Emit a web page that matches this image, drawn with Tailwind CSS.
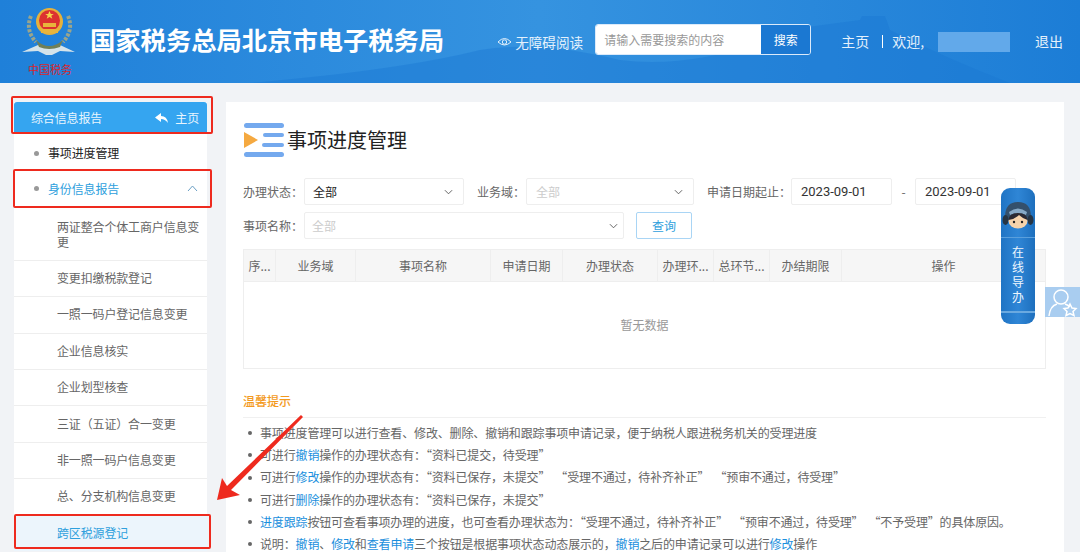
<!DOCTYPE html>
<html lang="zh-CN">
<head>
    <meta charset="UTF-8">
    <title>事项进度管理</title>
    <script src="https://cdn.jsdelivr.net/npm/@tailwindcss/browser@4"></script>
</head>
<body class="relative w-[1080px] h-[552px] overflow-hidden bg-[#f1f3f6] font-['Noto_Sans_CJK_SC','Noto_Sans',sans-serif] text-[12px] text-[#666]">
    <!-- Header -->
    <header class="relative h-[83px] flex items-center pb-[4px] overflow-hidden bg-gradient-to-r from-[#1f80d9] via-[#3593e0] to-[#1c7dd6] text-white">
        <svg class="absolute left-0 top-0" width="1080" height="83" viewBox="0 0 1080 83">
            <path d="M250 83 Q400 70 480 50 Q540 40 620 60 Q700 70 800 28 L860 20 L862 16 L885 16 L890 30 Q950 60 1010 83 Z" fill="#1b78d2" opacity=".45"/>
        </svg>
        <svg class="relative ml-[20px] shrink-0 self-start mt-[2px]" width="56" height="78" viewBox="0 0 56 78">
            <!-- wreath -->
            <path d="M11 14 Q5 28 16 40" fill="none" stroke="#9aa58c" stroke-width="4" stroke-dasharray="3 1.500"/>
            <path d="M48 14 Q54 28 43 40" fill="none" stroke="#9aa58c" stroke-width="4" stroke-dasharray="3 1.500"/>
            <!-- wings -->
            <path d="M2 50 L18 43 L29 46 L40 43 L55 50 L40 49 L32 53 L26 53 L18 49 Z" fill="#d5e3ea"/>
            <path d="M16 38 Q29 50 43 38 L40 45 Q29 49 19 45 Z" fill="#6f7f58"/>
            <!-- badge -->
            <circle cx="29.500" cy="19.500" r="13.500" fill="#e6b13b"/>
            <circle cx="29.500" cy="18.500" r="10.500" fill="#dc3130"/>
            <path d="M21 27 h17 v4 h-17 Z M23 21 h13 v4 h-13 Z" fill="#e8b53c"/>
            <path d="M29.500 9 l1.300 3 h3 l-2.500 1.800 1 3 -2.800-1.800 -2.800 1.800 1-3 -2.500-1.800 h3 Z" fill="#f4d24a"/>
            <text x="8" y="72" font-size="11" fill="#d8262c" font-family="Noto Sans CJK SC">中国税务</text>
        </svg>
        <h1 class="relative ml-[14px] text-[25.300px] font-bold leading-none whitespace-nowrap">国家税务总局北京市电子税务局</h1>
        <div class="relative ml-[53px] mt-[5px] flex items-center gap-[3px] text-[13.600px] text-[#e4f1fc]">
            <svg width="15" height="12" viewBox="0 0 15 12" fill="none" stroke="currentColor" stroke-width="1"><path d="M1 6 Q7.500-1 14 6 Q7.500 12 1 6 Z"/><circle cx="7.500" cy="6" r="2.200"/></svg>
            <span>无障碍阅读</span>
        </div>
        <div class="relative ml-[12px] flex w-[216px] h-[31px] rounded-[3px] border border-[#dbeafa] overflow-hidden">
            <span class="w-[165px] bg-white pl-[8px] leading-[29px] text-[12px] text-[#999]">请输入需要搜索的内容</span>
            <span class="flex-1 bg-[#1b78d2] text-center leading-[29px] text-[12px]">搜索</span>
        </div>
        <div class="relative ml-[30px] mt-[4px] flex items-center text-[14px] text-[#e4f1fc]">
            <span>主页</span>
            <span class="ml-[13px] w-px h-[13px] bg-white"></span>
            <span class="ml-[9px]">欢迎,</span>
            <span class="ml-[14px] w-[72px] h-[20px] bg-[#62a9ea]"></span>
            <span class="ml-[25px]">退出</span>
        </div>
    </header>

    <div class="flex items-start pt-[19px]">
        <!-- Sidebar -->
        <aside class="ml-[14px] w-[193px] shrink-0 bg-white tracking-[-0.150px]">
            <div class="h-[32px] flex items-center justify-between pl-[17px] pr-[8px] bg-[#35a5f0] text-[#e8f5fe] rounded-t-[3px]">
                <span>综合信息报告</span>
                <span class="flex items-center gap-[7px]">
                    <svg width="13" height="10" viewBox="0 0 13 10" fill="#fff"><path d="M6 0 L0 4.500 L6 9 V6 Q10 6 13 10 Q12 3 6 3 Z"/></svg>
                    主页
                </span>
            </div>
            <div class="h-[36px] flex items-center pt-[2px] pl-[20px] text-[#222]">
                <span class="w-[5px] h-[5px] rounded-full bg-[#999] mr-[9px]"></span>事项进度管理
            </div>
            <div class="h-[37px] flex items-center pl-[20px] pr-[9px] text-[#2ea0dd]">
                <span class="w-[5px] h-[5px] rounded-full bg-[#999] mr-[9px]"></span>身份信息报告
                <svg class="ml-auto" width="11" height="7" viewBox="0 0 11 7" fill="none" stroke="#6a9fc4"><path d="M1 6 L5.500 1 L10 6"/></svg>
            </div>
            <div class="border-t border-[#eee] pl-[43px] pr-[6px] pt-[11px] leading-[15px] h-[53px]">两证整合个体工商户信息变更</div>
            <div class="border-t border-[#eee] pl-[43px] h-[36px] leading-[33px]">变更扣缴税款登记</div>
            <div class="border-t border-[#eee] pl-[43px] h-[37px] leading-[34px]">一照一码户登记信息变更</div>
            <div class="border-t border-[#eee] pl-[43px] h-[36px] leading-[33px]">企业信息核实</div>
            <div class="border-t border-[#eee] pl-[43px] h-[36px] leading-[33px]">企业划型核查</div>
            <div class="border-t border-[#eee] pl-[43px] h-[37px] leading-[35px]">三证&#65288;五证&#65289;合一变更</div>
            <div class="border-t border-[#eee] pl-[43px] h-[36px] leading-[33px]">非一照一码户信息变更</div>
            <div class="border-t border-[#eee] pl-[43px] h-[37px] leading-[34px]">总、分支机构信息变更</div>
            <div class="pl-[43px] h-[36px] leading-[36px] bg-[#ecf5fc] text-[#2ea0dd]">跨区税源登记</div>
        </aside>

        <!-- Main card -->
        <main class="ml-[19px] w-[838px] h-[460px] bg-white pl-[17px] pr-[18px]">
            <div class="flex items-center h-[38px] mt-[19px]">
                <svg width="44" height="34" viewBox="0 0 44 34">
                    <rect x="1" y="0" width="40" height="5" rx="2.500" fill="#74a9ee"/>
                    <rect x="1" y="29" width="40" height="5" rx="2.500" fill="#74a9ee"/>
                    <rect x="20" y="10" width="21" height="4" rx="2" fill="#74a9ee"/>
                    <rect x="19" y="20" width="22" height="4" rx="2" fill="#74a9ee"/>
                    <path d="M1 9 L15 17 L1 25 Z" fill="#f5a940"/>
                </svg>
                <h2 class="text-[20px] text-[#222] font-normal leading-none">事项进度管理</h2>
            </div>

            <!-- Filters -->
            <div class="mt-[19px] flex items-center h-[27px]">
                <span class="w-[61px] shrink-0 whitespace-nowrap">办理状态&#65306;</span>
                <div class="w-[160px] h-[27px] border border-[#eee] rounded-[2px] flex items-center justify-between pl-[8px] pr-[10px] text-[#222]">全部
                    <svg width="9" height="6" viewBox="0 0 10 6" fill="none" stroke="#555"><path d="M1 1 L5 5 L9 1"/></svg>
                </div>
                <span class="ml-[13px] w-[49px] shrink-0 whitespace-nowrap">业务域&#65306;</span>
                <div class="w-[168px] h-[27px] border border-[#eee] rounded-[2px] flex items-center justify-between pl-[9px] pr-[10px] text-[#ccc]">全部
                    <svg width="9" height="6" viewBox="0 0 10 6" fill="none" stroke="#555"><path d="M1 1 L5 5 L9 1"/></svg>
                </div>
                <span class="ml-[13px] w-[84px] shrink-0 whitespace-nowrap">申请日期起止&#65306;</span>
                <div class="w-[101px] h-[27px] border border-[#eee] rounded-[2px] pl-[9px] leading-[25px] text-[#333] font-['Roboto'] text-[13px]">2023-09-01</div>
                <span class="w-[23px] text-center">-</span>
                <div class="w-[101px] h-[27px] border border-[#eee] rounded-[2px] pl-[9px] leading-[25px] text-[#333] font-['Roboto'] text-[13px]">2023-09-01</div>
            </div>
            <div class="mt-[7px] flex items-center h-[27px]">
                <span class="w-[61px] shrink-0 whitespace-nowrap">事项名称&#65306;</span>
                <div class="w-[320px] h-[27px] border border-[#eee] rounded-[2px] flex items-center justify-between pl-[7px] pr-[5px] text-[#ccc]">全部
                    <svg width="9" height="6" viewBox="0 0 10 6" fill="none" stroke="#555"><path d="M1 1 L5 5 L9 1"/></svg>
                </div>
                <span class="ml-[12px] w-[56px] h-[27px] border border-[#a9d5f5] rounded-[2px] text-center leading-[25px] text-[#2ea0dd]">查询</span>
            </div>

            <!-- Table -->
            <div class="mt-[10px] border border-[#eee] h-[120px]">
                <div class="flex h-[32px] bg-[#f6f6f6] border-b border-[#eee] leading-[31px] text-center">
                    <span class="w-[32px] border-r border-[#eee]">序...</span>
                    <span class="w-[80px] border-r border-[#eee]">业务域</span>
                    <span class="w-[135px] border-r border-[#eee]">事项名称</span>
                    <span class="w-[72px] border-r border-[#eee]">申请日期</span>
                    <span class="w-[95px] border-r border-[#eee]">办理状态</span>
                    <span class="w-[56px] border-r border-[#eee]">办理环...</span>
                    <span class="w-[56px] border-r border-[#eee]">总环节...</span>
                    <span class="w-[72px] border-r border-[#eee]">办结期限</span>
                    <span class="flex-1">操作</span>
                </div>
                <div class="h-[86px] flex items-center justify-center text-[#999]">暂无数据</div>
            </div>

            <!-- Tips -->
            <div class="mt-[24px] h-[25px] border-b border-[#f0f0f0] text-[#f39a1e] font-medium leading-[16px]">温馨提示</div>
            <ul class="mt-[4px] leading-[22.200px] whitespace-nowrap tracking-[-0.150px]">
                <li class="flex items-center"><span class="w-[4px] h-[4px] rounded-full bg-[#666] ml-[5px] mr-[8px]"></span><span>事项进度管理可以进行查看、修改、删除、撤销和跟踪事项申请记录&#65292;便于纳税人跟进税务机关的受理进度</span></li>
                <li class="flex items-center"><span class="w-[4px] h-[4px] rounded-full bg-[#666] ml-[5px] mr-[8px]"></span><span>可进行<b class="font-normal text-[#1a8fdd]">撤销</b>操作的办理状态有&#65306;&#8220;资料已提交&#65292;待受理&#8221;</span></li>
                <li class="flex items-center"><span class="w-[4px] h-[4px] rounded-full bg-[#666] ml-[5px] mr-[8px]"></span><span>可进行<b class="font-normal text-[#1a8fdd]">修改</b>操作的办理状态有&#65306;&#8220;资料已保存&#65292;未提交&#8221;&nbsp;&nbsp;&#8220;受理不通过&#65292;待补齐补正&#8221;&nbsp;&nbsp;&#8220;预审不通过&#65292;待受理&#8221;</span></li>
                <li class="flex items-center"><span class="w-[4px] h-[4px] rounded-full bg-[#666] ml-[5px] mr-[8px]"></span><span>可进行<b class="font-normal text-[#1a8fdd]">删除</b>操作的办理状态有&#65306;&#8220;资料已保存&#65292;未提交&#8221;</span></li>
                <li class="flex items-center"><span class="w-[4px] h-[4px] rounded-full bg-[#666] ml-[5px] mr-[8px]"></span><span><b class="font-normal text-[#1a8fdd]">进度跟踪</b>按钮可查看事项办理的进度&#65292;也可查看办理状态为&#65306;&#8220;受理不通过&#65292;待补齐补正&#8221;&nbsp;&nbsp;&#8220;预审不通过&#65292;待受理&#8221;&nbsp;&nbsp;&#8220;不予受理&#8221;的具体原因。</span></li>
                <li class="flex items-center"><span class="w-[4px] h-[4px] rounded-full bg-[#666] ml-[5px] mr-[8px]"></span><span>说明&#65306;<b class="font-normal text-[#1a8fdd]">撤销</b>、<b class="font-normal text-[#1a8fdd]">修改</b>和<b class="font-normal text-[#1a8fdd]">查看申请</b>三个按钮是根据事项状态动态展示的&#65292;<b class="font-normal text-[#1a8fdd]">撤销</b>之后的申请记录可以进行<b class="font-normal text-[#1a8fdd]">修改</b>操作</span></li>
            </ul>
        </main>
    </div>

    <!-- Floating guide -->
    <div class="absolute left-[1001px] top-[188px] w-[34px] h-[136px] rounded-[9px] bg-gradient-to-r from-[#1f74c4] via-[#2f86d6] to-[#1d6fbd] flex flex-col items-center text-white">
        <svg class="mt-[13px]" width="32" height="28" viewBox="0 0 32 28">
            <path d="M3 16 Q3 1 16 1 Q29 1 29 16 L28 20 H4 Z" fill="#34506c"/>
            <path d="M7 11 Q16 4 25 11 L24 14 Q16 10 8 14 Z" fill="#86a9c6"/>
            <ellipse cx="3.500" cy="19" rx="3" ry="5" fill="#263544"/>
            <ellipse cx="28.500" cy="19" rx="3" ry="5" fill="#263544"/>
            <ellipse cx="16" cy="20" rx="9.500" ry="7.500" fill="#f6d3ab"/>
            <path d="M6.500 19 Q7 12 16 12 Q25 12 25.500 19 Q20 17 17 14 Q13 18 6.500 19 Z" fill="#2b2a33"/>
            <circle cx="12" cy="21" r="1.200" fill="#222"/>
            <circle cx="20" cy="21" r="1.200" fill="#222"/>
        </svg>
        <span class="mt-[8px] w-full border-t border-[#5a9fdc]"></span>
        <div class="mt-[6px] text-[12px] leading-[15px] text-center text-[#eef6fd]">在<br>线<br>导<br>办</div>
        <span class="mt-[7px] w-full border-t-2 border-[#6aa9e0]"></span>
    </div>
    <div class="absolute left-[1045px] top-[287px] w-[35px] h-[30px] bg-[#a9cdf0]">
        <svg width="35" height="30" viewBox="0 0 35 30" fill="none" stroke="#fff" stroke-width="1.500">
            <circle cx="16" cy="10" r="7"/>
            <path d="M4 29 Q5 19 12 17 M20 17 Q23 18 25 20"/>
            <path d="M25 17 l2 4 4 .500 -3 3 1 4 -4-2 -4 2 1-4 -3-3 4-.500 Z"/>
        </svg>
    </div>

    <!-- Red annotations -->
    <div class="absolute left-[11px] top-[96px] w-[202px] h-[38px] border-[2.500px] border-[#ee2a1e] rounded-[2px]"></div>
    <div class="absolute left-[13px] top-[169px] w-[199px] h-[39px] border-[2.500px] border-[#ee2a1e] rounded-[2px]"></div>
    <div class="absolute left-[14px] top-[514px] w-[197px] h-[35px] border-[2.500px] border-[#ee2a1e] rounded-[2px]"></div>
    <svg class="absolute left-[210px] top-[410px]" width="100" height="100" viewBox="0 0 100 100">
        <path d="M91 5 L93 7 L21 80 L30 85 L7 90 L12 68 L17 76 Z" fill="#ee2a1e"/>
    </svg>
</body>
</html>
